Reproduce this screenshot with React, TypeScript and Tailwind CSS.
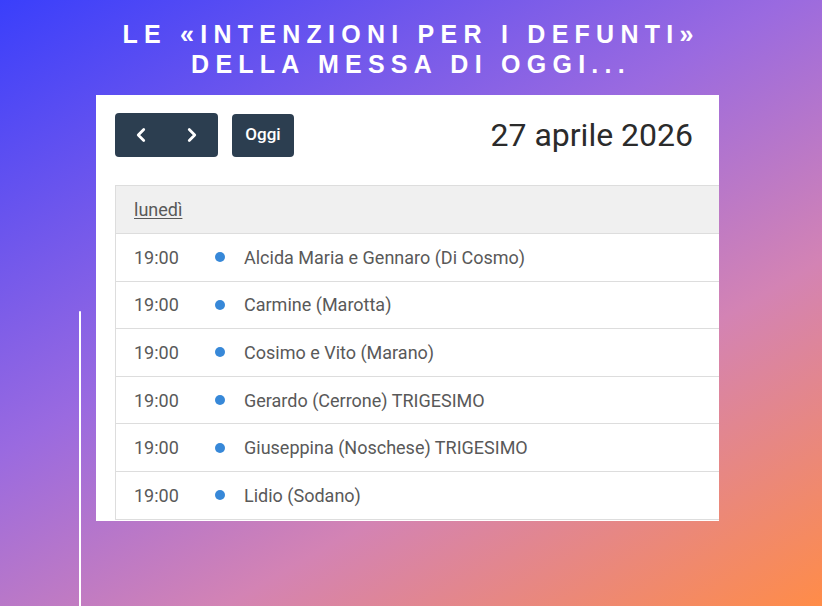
import { ChevronLeft, ChevronRight } from 'lucide-react';

const events = [
  'Alcida Maria e Gennaro (Di Cosmo)',
  'Carmine (Marotta)',
  'Cosimo e Vito (Marano)',
  'Gerardo (Cerrone) TRIGESIMO',
  'Giuseppina (Noschese) TRIGESIMO',
  'Lidio (Sodano)',
];

function Toolbar() {
  return (
    <div className="flex h-[44px] items-center justify-between pr-[7px]">
      <div className="flex h-full items-center gap-[14px]">
        <div className="flex h-full w-[103px] overflow-hidden rounded-[4px] bg-[#2c3e50]">
          <button className="flex flex-1 items-center justify-center text-white" aria-label="Precedente">
            <ChevronLeft size={22} strokeWidth={3} />
          </button>
          <button className="flex flex-1 items-center justify-center text-white" aria-label="Successivo">
            <ChevronRight size={22} strokeWidth={3} />
          </button>
        </div>
        <button className="h-[43px] w-[62px] rounded-[4px] bg-[#2c3e50] text-[17px] font-medium text-white">
          Oggi
        </button>
      </div>
      <h2 className="text-[32px] leading-none text-[#2b2b2b]">27 aprile 2026</h2>
    </div>
  );
}

function EventList() {
  return (
    <div className="mt-[28px] w-[640px] border-l border-t border-[#dddddd] text-[18px] text-[#595959]">
      <div className="flex h-[48px] items-center border-b border-[#dddddd] bg-[#f0f0f0] pl-[18px]">
        <a className="underline underline-offset-2">lunedì</a>
      </div>
      {events.map((title) => (
        <div key={title} className="flex h-[47.6px] items-center border-b border-[#dddddd] pl-[18px]">
          <span className="w-[81px]">19:00</span>
          <span className="h-[10px] w-[10px] rounded-full bg-[#3788d8]" />
          <span className="ml-[19px]">{title}</span>
        </div>
      ))}
    </div>
  );
}

export default function App() {
  return (
    <div
      className="relative h-[606px] w-[822px] overflow-hidden bg-[linear-gradient(150deg,#3a3ffb_0%,#9a6ae0_42%,#d383b4_68%,#ff8c48_100%)]"
      style={{ fontFamily: 'Roboto, "Liberation Sans", sans-serif' }}
    >
      <div className="absolute bottom-0 left-[79px] top-[311px] w-[2px] rounded-t-full bg-white" />
      <h1
        className="pt-[19px] text-center text-[25px] font-bold uppercase leading-[30px] tracking-[0.25em] text-white"
        style={{ fontFamily: '"Liberation Sans", Arial, sans-serif' }}
      >
        Le «Intenzioni per i defunti»
        <br />
        della messa di oggi...
      </h1>
      <div className="relative ml-[96px] mt-[16px] h-[426px] w-[623px] overflow-hidden bg-white px-[19px] pt-[18px]">
        <Toolbar />
        <EventList />
      </div>
    </div>
  );
}
